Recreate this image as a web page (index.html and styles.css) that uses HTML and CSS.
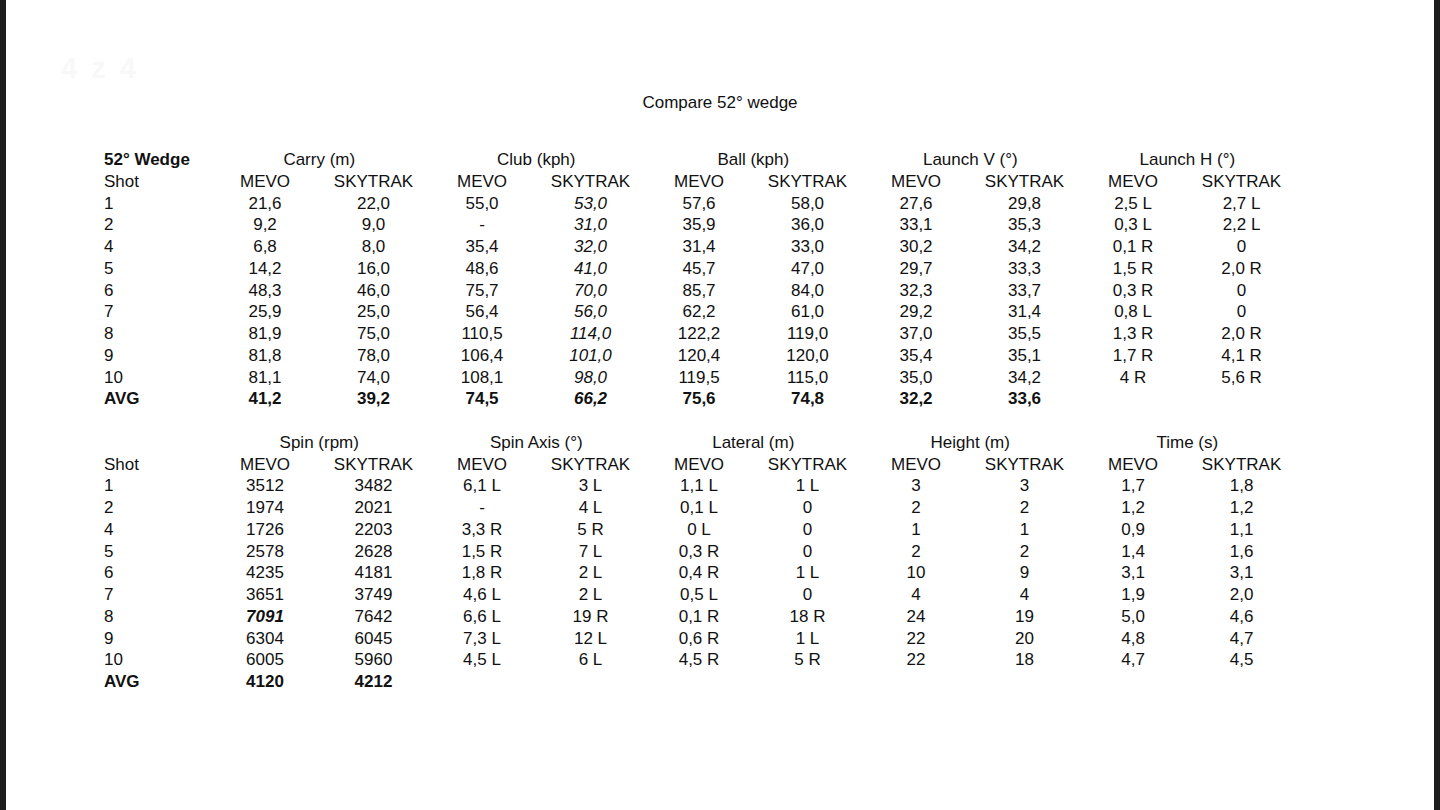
FILE: index.html
```html
<!DOCTYPE html>
<html lang="en">
<head>
<meta charset="utf-8">
<title>Compare 52° wedge</title>
<link rel="stylesheet" href="styles.css">
</head>
<body>
<div class="page">
  <div class="ghost-badge">4 z 4</div>
  <h1 class="title">Compare 52° wedge</h1>

  <table class="sheet">
    <colgroup><col class="c-shot"><col span="10" class="c-val"></colgroup>
    <tr class="group">
      <td class="lbl b">52° Wedge</td>
      <td colspan="2">Carry (m)</td><td colspan="2">Club (kph)</td><td colspan="2">Ball (kph)</td><td colspan="2">Launch V (°)</td><td colspan="2">Launch H (°)</td>
    </tr>
    <tr><td class="lbl">Shot</td><td>MEVO</td><td>SKYTRAK</td><td>MEVO</td><td>SKYTRAK</td><td>MEVO</td><td>SKYTRAK</td><td>MEVO</td><td>SKYTRAK</td><td>MEVO</td><td>SKYTRAK</td></tr>
    <tr><td class="lbl">1</td><td>21,6</td><td>22,0</td><td>55,0</td><td class="i">53,0</td><td>57,6</td><td>58,0</td><td>27,6</td><td>29,8</td><td>2,5 L</td><td>2,7 L</td></tr>
    <tr><td class="lbl">2</td><td>9,2</td><td>9,0</td><td>-</td><td class="i">31,0</td><td>35,9</td><td>36,0</td><td>33,1</td><td>35,3</td><td>0,3 L</td><td>2,2 L</td></tr>
    <tr><td class="lbl">4</td><td>6,8</td><td>8,0</td><td>35,4</td><td class="i">32,0</td><td>31,4</td><td>33,0</td><td>30,2</td><td>34,2</td><td>0,1 R</td><td>0</td></tr>
    <tr><td class="lbl">5</td><td>14,2</td><td>16,0</td><td>48,6</td><td class="i">41,0</td><td>45,7</td><td>47,0</td><td>29,7</td><td>33,3</td><td>1,5 R</td><td>2,0 R</td></tr>
    <tr><td class="lbl">6</td><td>48,3</td><td>46,0</td><td>75,7</td><td class="i">70,0</td><td>85,7</td><td>84,0</td><td>32,3</td><td>33,7</td><td>0,3 R</td><td>0</td></tr>
    <tr><td class="lbl">7</td><td>25,9</td><td>25,0</td><td>56,4</td><td class="i">56,0</td><td>62,2</td><td>61,0</td><td>29,2</td><td>31,4</td><td>0,8 L</td><td>0</td></tr>
    <tr><td class="lbl">8</td><td>81,9</td><td>75,0</td><td>110,5</td><td class="i">114,0</td><td>122,2</td><td>119,0</td><td>37,0</td><td>35,5</td><td>1,3 R</td><td>2,0 R</td></tr>
    <tr><td class="lbl">9</td><td>81,8</td><td>78,0</td><td>106,4</td><td class="i">101,0</td><td>120,4</td><td>120,0</td><td>35,4</td><td>35,1</td><td>1,7 R</td><td>4,1 R</td></tr>
    <tr><td class="lbl">10</td><td>81,1</td><td>74,0</td><td>108,1</td><td class="i">98,0</td><td>119,5</td><td>115,0</td><td>35,0</td><td>34,2</td><td>4 R</td><td>5,6 R</td></tr>
    <tr class="avg"><td class="lbl">AVG</td><td>41,2</td><td>39,2</td><td>74,5</td><td class="i">66,2</td><td>75,6</td><td>74,8</td><td>32,2</td><td>33,6</td><td></td><td></td></tr>
  </table>

  <table class="sheet second">
    <colgroup><col class="c-shot"><col span="10" class="c-val"></colgroup>
    <tr class="group">
      <td class="lbl"></td>
      <td colspan="2">Spin (rpm)</td><td colspan="2">Spin Axis (°)</td><td colspan="2">Lateral (m)</td><td colspan="2">Height (m)</td><td colspan="2">Time (s)</td>
    </tr>
    <tr><td class="lbl">Shot</td><td>MEVO</td><td>SKYTRAK</td><td>MEVO</td><td>SKYTRAK</td><td>MEVO</td><td>SKYTRAK</td><td>MEVO</td><td>SKYTRAK</td><td>MEVO</td><td>SKYTRAK</td></tr>
    <tr><td class="lbl">1</td><td>3512</td><td>3482</td><td>6,1 L</td><td>3 L</td><td>1,1 L</td><td>1 L</td><td>3</td><td>3</td><td>1,7</td><td>1,8</td></tr>
    <tr><td class="lbl">2</td><td>1974</td><td>2021</td><td>-</td><td>4 L</td><td>0,1 L</td><td>0</td><td>2</td><td>2</td><td>1,2</td><td>1,2</td></tr>
    <tr><td class="lbl">4</td><td>1726</td><td>2203</td><td>3,3 R</td><td>5 R</td><td>0 L</td><td>0</td><td>1</td><td>1</td><td>0,9</td><td>1,1</td></tr>
    <tr><td class="lbl">5</td><td>2578</td><td>2628</td><td>1,5 R</td><td>7 L</td><td>0,3 R</td><td>0</td><td>2</td><td>2</td><td>1,4</td><td>1,6</td></tr>
    <tr><td class="lbl">6</td><td>4235</td><td>4181</td><td>1,8 R</td><td>2 L</td><td>0,4 R</td><td>1 L</td><td>10</td><td>9</td><td>3,1</td><td>3,1</td></tr>
    <tr><td class="lbl">7</td><td>3651</td><td>3749</td><td>4,6 L</td><td>2 L</td><td>0,5 L</td><td>0</td><td>4</td><td>4</td><td>1,9</td><td>2,0</td></tr>
    <tr><td class="lbl">8</td><td class="b i">7091</td><td>7642</td><td>6,6 L</td><td>19 R</td><td>0,1 R</td><td>18 R</td><td>24</td><td>19</td><td>5,0</td><td>4,6</td></tr>
    <tr><td class="lbl">9</td><td>6304</td><td>6045</td><td>7,3 L</td><td>12 L</td><td>0,6 R</td><td>1 L</td><td>22</td><td>20</td><td>4,8</td><td>4,7</td></tr>
    <tr><td class="lbl">10</td><td>6005</td><td>5960</td><td>4,5 L</td><td>6 L</td><td>4,5 R</td><td>5 R</td><td>22</td><td>18</td><td>4,7</td><td>4,5</td></tr>
    <tr class="avg"><td class="lbl">AVG</td><td>4120</td><td>4212</td><td></td><td></td><td></td><td></td><td></td><td></td><td></td><td></td></tr>
  </table>
</div>
</body>
</html>
```

FILE: styles.css
```css
* { box-sizing: border-box; }

html, body {
  margin: 0;
  padding: 0;
  background: #ffffff;
}

.page {
  position: relative;
  width: 1440px;
  height: 810px;
  overflow: hidden;
  background: #ffffff;
  border-left: 6px solid #1d1d1d;
  border-right: 6px solid #1d1d1d;
  padding-top: 92px;
  font-family: "Liberation Sans", Arial, sans-serif;
  font-size: 17px;
  color: #111111;
}

.ghost-badge {
  position: absolute;
  left: 55px;
  top: 52px;
  font-size: 29px;
  font-weight: bold;
  letter-spacing: 3px;
  color: #f8f8f8;
}

.title {
  margin: 0;
  font-size: 17px;
  font-weight: normal;
  line-height: 21.75px;
  height: 21.75px;
  text-align: center;
}

.sheet {
  margin: 35.4px 0 0 98px;
  border-collapse: collapse;
  table-layout: fixed;
  width: 1191.75px;
}

.sheet.second {
  margin-top: 21.75px;
}

.c-shot { width: 106.75px; }
.c-val { width: 108.5px; }

.sheet td {
  padding: 0;
  height: 21.75px;
  line-height: 21.75px;
  text-align: center;
  white-space: nowrap;
}

.sheet td.lbl { text-align: left; }

.b { font-weight: bold; }
.i { font-style: italic; }

.avg td { font-weight: bold; }
```
